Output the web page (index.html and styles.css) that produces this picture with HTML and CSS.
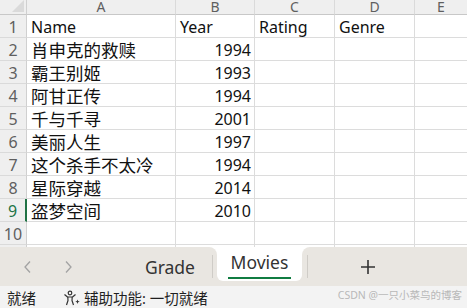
FILE: index.html
```html
<!DOCTYPE html>
<html lang="zh-CN">

<head>
    <meta charset="UTF-8">
    <meta name="viewport" content="width=device-width, initial-scale=1.0">
    <title>Movies - Excel</title>
    <link rel="stylesheet" href="styles.css">
</head>

<body>
    <div class="app">
        <!-- 表格区域 -->
        <div class="sheet">
            <div class="corner"><span class="tri"></span></div>
            <div class="colhead">A</div>
            <div class="colhead">B</div>
            <div class="colhead">C</div>
            <div class="colhead">D</div>
            <div class="colhead last">E</div>

            <div class="rowhead">1</div>
            <div class="cell">Name</div>
            <div class="cell">Year</div>
            <div class="cell">Rating</div>
            <div class="cell">Genre</div>
            <div class="cell last"></div>

            <div class="rowhead">2</div>
            <div class="cell zh">肖申克的救赎</div>
            <div class="cell num">1994</div>
            <div class="cell"></div>
            <div class="cell"></div>
            <div class="cell last"></div>

            <div class="rowhead">3</div>
            <div class="cell zh">霸王别姬</div>
            <div class="cell num">1993</div>
            <div class="cell"></div>
            <div class="cell"></div>
            <div class="cell last"></div>

            <div class="rowhead">4</div>
            <div class="cell zh">阿甘正传</div>
            <div class="cell num">1994</div>
            <div class="cell"></div>
            <div class="cell"></div>
            <div class="cell last"></div>

            <div class="rowhead">5</div>
            <div class="cell zh">千与千寻</div>
            <div class="cell num">2001</div>
            <div class="cell"></div>
            <div class="cell"></div>
            <div class="cell last"></div>

            <div class="rowhead">6</div>
            <div class="cell zh">美丽人生</div>
            <div class="cell num">1997</div>
            <div class="cell"></div>
            <div class="cell"></div>
            <div class="cell last"></div>

            <div class="rowhead">7</div>
            <div class="cell zh">这个杀手不太冷</div>
            <div class="cell num">1994</div>
            <div class="cell"></div>
            <div class="cell"></div>
            <div class="cell last"></div>

            <div class="rowhead">8</div>
            <div class="cell zh">星际穿越</div>
            <div class="cell num">2014</div>
            <div class="cell"></div>
            <div class="cell"></div>
            <div class="cell last"></div>

            <div class="rowhead sel">9</div>
            <div class="cell zh">盗梦空间</div>
            <div class="cell num">2010</div>
            <div class="cell"></div>
            <div class="cell"></div>
            <div class="cell last"></div>

            <div class="rowhead">10</div>
            <div class="cell"></div>
            <div class="cell"></div>
            <div class="cell"></div>
            <div class="cell"></div>
            <div class="cell last"></div>

            <div class="rowhead open"></div>
            <div class="cell open"></div>
            <div class="cell open"></div>
            <div class="cell open"></div>
            <div class="cell open"></div>
            <div class="cell open last"></div>
        </div>

        <!-- 工作表标签 -->
        <div class="tabbar">
            <div class="tabs-left">
                <span class="nav">
                    <svg width="10" height="14" viewBox="0 0 10 14"><polyline points="7,1.5 2,7 7,12.5" fill="none" stroke="#a3a3a3" stroke-width="1.3"/></svg>
                </span>
                <span class="nav">
                    <svg width="10" height="14" viewBox="0 0 10 14"><polyline points="3,1.5 8,7 3,12.5" fill="none" stroke="#a3a3a3" stroke-width="1.3"/></svg>
                </span>
                <span class="tab">Grade</span>
                <span class="sep"></span>
            </div>
            <div class="tab-active-wrap">
                <div class="tab-active"><span class="label">Movies</span></div>
            </div>
            <div class="tabs-right">
                <span class="sep"></span>
                <span class="add">
                    <svg width="16" height="16" viewBox="0 0 16 16"><path d="M8 1v14M1 8h14" stroke="#333" stroke-width="1.6"/></svg>
                </span>
            </div>
        </div>

        <!-- 状态栏 -->
        <div class="status">
            <span class="ready">就绪</span>
            <span class="access">
                <svg width="18" height="16" viewBox="0 0 18 16">
                    <circle cx="7" cy="3" r="1.8" fill="none" stroke="#333" stroke-width="1.2"/>
                    <path d="M1.5 4.5 L4.5 7 L9.5 7 L12.5 4.5 M4.8 7 L5 10.5 L3.5 15 M9.2 7 L9 10.5 L10.5 15" fill="none" stroke="#333" stroke-width="1.2" stroke-linejoin="round"/>
                    <path d="M14.5 9.5 l0.6 1.6 1.6 0.6 -1.6 0.6 -0.6 1.6 -0.6 -1.6 -1.6 -0.6 1.6 -0.6z" fill="#333"/>
                </svg>
                辅助功能: 一切就绪
            </span>
            <span class="mark">CSDN @一只小菜鸟的博客</span>
        </div>
    </div>
</body>

</html>
```

FILE: styles.css
```css
* {
    padding: 0;
    margin: 0;
    box-sizing: border-box;
}

body {
    width: 467px;
    height: 308px;
    overflow: hidden;
    background: #fff;
    font-family: "Noto Sans", "Noto Sans CJK SC", sans-serif;
    color: #111;
}

.app {
    display: flex;
    flex-direction: column;
    height: 308px;
    position: relative;
}

/* 表格 */
.sheet {
    display: grid;
    grid-template-columns: 27px 149px 79px 80px 80px 1fr;
    grid-template-rows: 15px repeat(10, 23px) 1fr;
    height: 249px;
    overflow: hidden;
}

.sheet .corner,
.sheet .colhead,
.sheet .rowhead {
    background: #efefef;
    color: #5f5f5f;
    border-right: 1px solid #d0d0d0;
    border-bottom: 1px solid #c8c8c8;
}

.sheet .corner {
    display: flex;
    justify-content: flex-end;
    align-items: flex-end;
    padding: 0 2px 2px 0;
}

.sheet .corner .tri {
    width: 0;
    height: 0;
    border-left: 12px solid transparent;
    border-bottom: 12px solid #dadada;
}

.sheet .colhead {
    font-size: 14px;
    line-height: 14px;
    text-align: center;
    border-right-color: #dadada;
}

.sheet .colhead.last {
    border-right: none;
}

.sheet .rowhead {
    font-size: 16px;
    line-height: 22px;
    text-align: center;
    border-bottom-color: #dadada;
    padding-top: 1px;
}

.sheet .rowhead.sel {
    color: #217346;
    border-right: 2px solid #217346;
}

.sheet .cell {
    border-right: 1px solid #dcdcdc;
    border-bottom: 1px solid #dcdcdc;
    font-size: 16px;
    line-height: 22px;
    padding: 1px 0 0 4px;
    white-space: nowrap;
    overflow: hidden;
}

.sheet .cell.zh {
    font-size: 17.5px;
}

.sheet .cell.num {
    text-align: right;
    padding-right: 3px;
}

.sheet .cell.last {
    border-right: none;
}

.sheet .open {
    border-bottom: none;
}

/* 标签栏 */
.tabbar {
    display: flex;
    height: 39px;
    background: #fff;
}

.tabs-left {
    width: 217px;
    background: #e9e6e1;
    border-top-right-radius: 8px;
    display: flex;
    align-items: center;
    padding-left: 8px;
}

.tabbar .nav {
    width: 40px;
    display: flex;
    justify-content: center;
}

.tabbar .tab {
    margin-left: auto;
    margin-right: 17px;
    font-size: 17.5px;
    color: #333;
}

.tabbar .sep {
    width: 1px;
    height: 23px;
    background: #cfccc7;
}

.tabs-left .sep {
    margin-right: 4px;
}

.tab-active-wrap {
    width: 85px;
    background: #e9e6e1;
}

.tab-active {
    height: 34px;
    background: #fff;
    border-radius: 0 0 6px 6px;
    display: flex;
    justify-content: center;
    padding-top: 2px;
}

.tab-active .label {
    font-size: 17.5px;
    line-height: 26px;
    color: #333;
    padding: 0 3px 1px;
    height: 30px;
    border-bottom: 2px solid #107c41;
}

.tabs-right {
    flex: 1;
    background: #e9e6e1;
    border-top-left-radius: 8px;
    display: flex;
    align-items: center;
    padding-left: 5px;
}

.tabs-right .add {
    margin-left: 52px;
    display: flex;
}

/* 状态栏 */
.status {
    flex: 1;
    background: #f3f3f3;
    display: flex;
    align-items: center;
    padding-left: 7px;
    font-size: 14.5px;
    color: #1f1f1f;
}

.status .ready {
    margin-top: 1px;
}

.status .access {
    display: flex;
    align-items: center;
    margin-left: 27px;
    margin-top: 1px;
}

.status .access svg {
    margin-right: 3px;
}

.status .mark {
    position: absolute;
    right: 5px;
    bottom: 6px;
    font-size: 10.5px;
    color: #b8b8b8;
}
```
